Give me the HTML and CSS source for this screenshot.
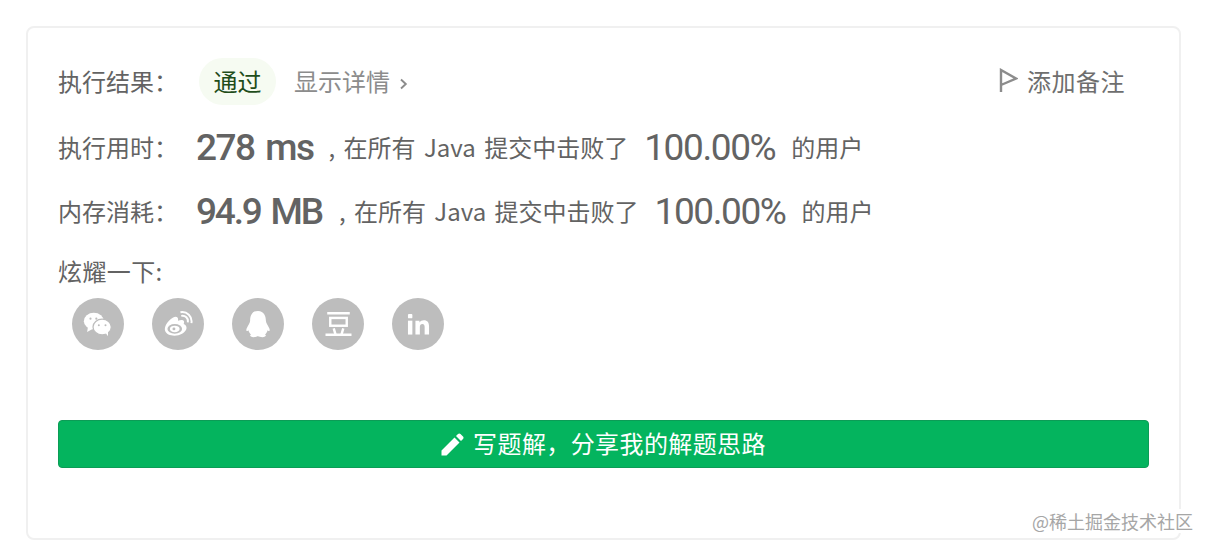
FILE: index.html
```html
<!DOCTYPE html>
<html>
<head>
<title>提交结果</title>
<link rel="stylesheet" href="styles.css">
</head>
<body>
<div class="card">
    <div class="row status-row">
        <span class="label">执行结果：</span>
        <span class="pass">通过</span>
        <span class="details">显示详情
            <svg class="chevron" width="9" height="14" viewBox="0 0 9 14"><path d="M2 2.5 L6.8 7 L2 11.5" fill="none" stroke="#8c8c8c" stroke-width="1.9"/></svg>
        </span>
        <span class="note">
            <svg width="19" height="25" viewBox="0 0 19 25"><path d="M2 24 V2 L17 10.5 L2 17" fill="none" stroke="#8c8c8c" stroke-width="2.4"/></svg>
            添加备注
        </span>
    </div>
    <div class="row stat-row">
        <span class="label">执行用时：</span>
        <span class="big">278 ms</span>
        <span class="text">, 在所有 Java 提交中击败了</span>
        <span class="pct">100.00%</span>
        <span class="text">的用户</span>
    </div>
    <div class="row stat-row second">
        <span class="label">内存消耗：</span>
        <span class="big">94.9 MB</span>
        <span class="text">, 在所有 Java 提交中击败了</span>
        <span class="pct">100.00%</span>
        <span class="text">的用户</span>
    </div>
    <div class="share-label">炫耀一下:</div>
    <div class="share">
        <span class="circle">
            <svg width="30" height="25" viewBox="0 0 36 30">
                <ellipse cx="13" cy="11" rx="12" ry="10" fill="#fff"/>
                <path d="M6 17 L5 24 L12 20 Z" fill="#fff"/>
                <ellipse cx="23" cy="18" rx="11" ry="9.5" fill="#fff" stroke="#bdbdbd" stroke-width="1.5"/>
                <path d="M27 25 L30 29 L30 23 Z" fill="#fff"/>
                <circle cx="9" cy="8" r="1.3" fill="#bdbdbd"/>
                <circle cx="16" cy="8" r="1.3" fill="#bdbdbd"/>
                <circle cx="19" cy="16" r="1.2" fill="#bdbdbd"/>
                <circle cx="27" cy="16" r="1.2" fill="#bdbdbd"/>
            </svg>
        </span>
        <span class="circle">
            <svg width="30" height="26" viewBox="0 0 36 32">
                <path d="M12 8 C4 13 1 20 2 24 C4 31 16 32 23 28 C30 24 30 18 25 16 C27 11 23 10 18 12 C19 8 16 6 12 8 Z" fill="#fff"/>
                <ellipse cx="14" cy="22" rx="9" ry="6" fill="#bdbdbd"/>
                <ellipse cx="14" cy="22" rx="6" ry="4" fill="#fff"/>
                <circle cx="13" cy="22" r="1.8" fill="#bdbdbd"/>
                <path d="M22 6 C27 5 31 9 30 14 M21 1.5 C29 0 36 7 34.5 15" fill="none" stroke="#fff" stroke-width="2.4"/>
            </svg>
        </span>
        <span class="circle">
            <svg width="28" height="28" viewBox="0 0 32 32">
                <path d="M16 1 C9 1 7 7 7 12 C7 15 5 17 3 21 C2 24 3 25 5 23 C6 26 7 27 8 28 C6 29 7 31 11 31 C13 31 15 30 16 30 C17 30 19 31 21 31 C25 31 26 29 24 28 C25 27 26 26 27 23 C29 25 30 24 29 21 C27 17 25 15 25 12 C25 7 23 1 16 1 Z" fill="#fff"/>
            </svg>
        </span>
        <span class="circle">
            <svg width="27" height="26" viewBox="0 0 30 30">
                <path d="M2 2.5 H28 M0 27.5 H30" stroke="#fff" stroke-width="2.8"/>
                <rect x="5.5" y="8" width="19" height="9" fill="none" stroke="#fff" stroke-width="2.8"/>
                <path d="M9.5 20 L11.5 27 M20.5 20 L18.5 27" stroke="#fff" stroke-width="2.8"/>
            </svg>
        </span>
        <span class="circle">
            <svg width="23" height="23" viewBox="0 0 24 24">
                <rect x="1" y="1" width="4.6" height="4.6" rx="1" fill="#fff"/>
                <rect x="1" y="8" width="4.6" height="14.5" fill="#fff"/>
                <path d="M8.8 8 H13 V10 C14 8.4 15.6 7.6 17.6 7.6 C21.4 7.6 23 10 23 13.8 V22.5 H18.4 V14.6 C18.4 12.6 17.6 11.5 16 11.5 C14.4 11.5 13.4 12.6 13.4 14.6 V22.5 H8.8 Z" fill="#fff"/>
            </svg>
        </span>
    </div>
    <div class="solution">
        <svg class="pen" width="23" height="23" viewBox="0 0 23 23"><path d="M0.5 22.5 V17.5 L13.5 4.5 L18.5 9.5 L5.5 22.5 Z M15 3 L17 1 C17.8 0.3 18.7 0.3 19.5 1 L22 3.5 C22.7 4.3 22.7 5.2 22 6 L20 8 Z" fill="#fff"/></svg>
        写题解，分享我的解题思路
    </div>
    <div class="watermark">@稀土掘金技术社区</div>
</div>
</body>
</html>
```

FILE: styles.css
```css
* {
    box-sizing: border-box;
}
body {
    margin: 0;
    background-color: white;
    font: 24px/32px "Noto Sans CJK SC", sans-serif;
    color: #636363;
    width: 1210px;
    height: 550px;
    overflow: hidden;
}
.card {
    position: relative;
    margin: 26px 0 0 26px;
    width: 1155px;
    height: 514px;
    padding: 0 30px;
    border: 2px solid #f0f0f0;
    border-radius: 8px;
}
.row {
    display: flex;
    align-items: center;
    white-space: nowrap;
}
.label {
    width: 138px;
    flex: none;
}
.status-row {
    height: 47px;
    margin-top: 30px;
}
.status-row .label,
.details,
.note {
    padding-bottom: 2px;
}
.pass {
    margin-left: 3px;
    width: 77px;
    height: 47px;
    line-height: 45px;
    text-align: center;
    background-color: #f6fbf2;
    border-radius: 24px;
    color: #1f4d1a;
}
.details {
    margin-left: 18px;
    color: #8c8c8c;
}
.chevron {
    margin-left: 4px;
}
.note {
    margin-left: auto;
    margin-right: 24px;
    display: flex;
    align-items: center;
    gap: 9px;
    color: #6e6e6e;
    letter-spacing: 0.5px;
}
.stat-row {
    margin-top: 17px;
    height: 50px;
}
.stat-row.second {
    margin-top: 14px;
}
.big {
    padding-top: 2px;
    font: 500 37px/50px Roboto, sans-serif;
    letter-spacing: -1.5px;
    word-spacing: 3px;
}
.second .big {
    letter-spacing: -2.2px;
}
.text {
    word-spacing: 3px;
}
.big + .text {
    margin-left: 15px;
}
.second .big + .text {
    margin-left: 17px;
}
.pct {
    padding-top: 2px;
    font: 400 37px/50px Roboto, sans-serif;
    letter-spacing: -1.4px;
    margin: 0 16px;
}
.share-label {
    margin-top: 19px;
    letter-spacing: 0.4px;
}
.share {
    display: flex;
    gap: 28px;
    margin: 11px 0 0 14px;
}
.circle {
    width: 52px;
    height: 52px;
    border-radius: 50%;
    background-color: #bdbdbd;
    display: flex;
    align-items: center;
    justify-content: center;
}
.solution {
    margin-top: 70px;
    padding-bottom: 2px;
    height: 48px;
    background-color: #04b45e;
    border: 1px solid #0c9c56;
    border-radius: 4px;
    color: white;
    letter-spacing: 0.4px;
    display: flex;
    align-items: center;
    justify-content: center;
    gap: 9px;
}
.pen {
    margin-top: 2px;
}
.watermark {
    position: absolute;
    right: -14px;
    bottom: 5px;
    font-size: 18px;
    line-height: 24px;
    color: #a6a6a6;
    background: white;
    padding-left: 3px;
}
```
